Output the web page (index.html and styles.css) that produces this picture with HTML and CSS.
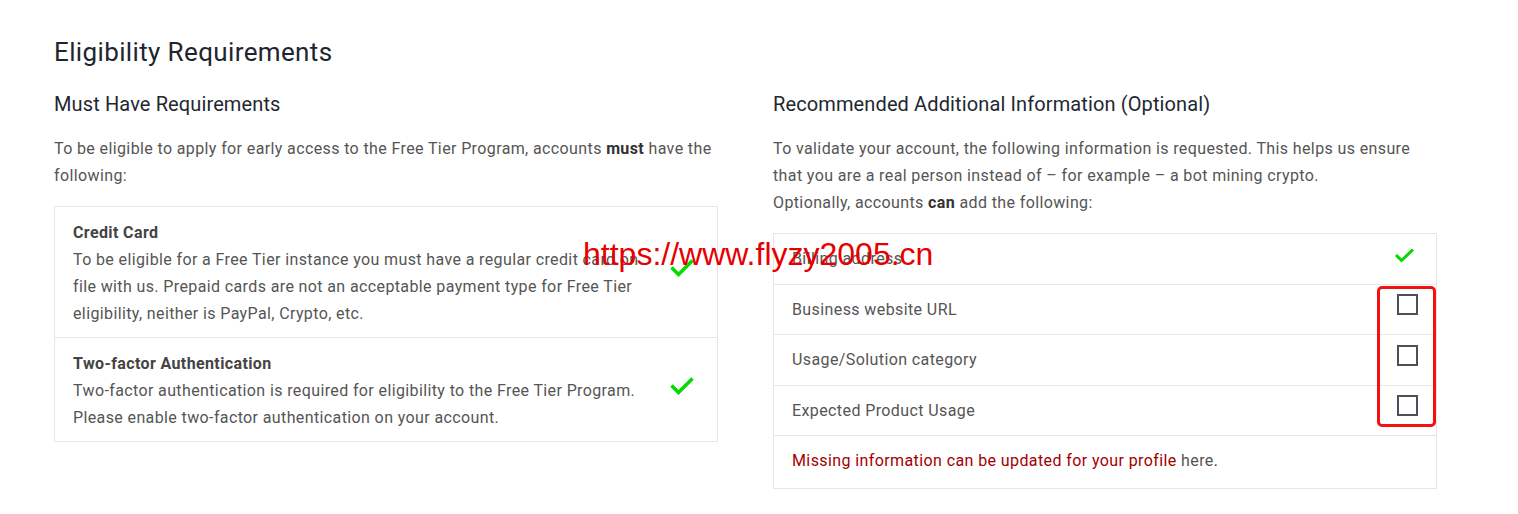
FILE: index.html
```html
<!DOCTYPE html>
<html lang="en">
<head>
  <meta charset="UTF-8">
  <meta name="viewport" content="width=device-width, initial-scale=1.0">
  <title>Eligibility Requirements</title>
  <link rel="stylesheet" href="styles.css">
</head>
<body>
  <div class="page">
    <h1>Eligibility Requirements</h1>
    <div class="columns">
      <div class="col">
        <h2>Must Have Requirements</h2>
        <p class="intro">To be eligible to apply for early access to the Free Tier Program, accounts <b>must</b> have the following:</p>
        <div class="box">
          <div class="req">
            <div class="req-text">
              <div class="req-title">Credit Card</div>
              To be eligible for a Free Tier instance you must have a regular credit card on file with us. Prepaid cards are not an acceptable payment type for Free Tier eligibility, neither is PayPal, Crypto, etc.
            </div>
            <svg class="check" viewBox="0 0 26 21"><path d="M2.5 10.5 L9.5 17.5 L23.5 3.5" /></svg>
          </div>
          <div class="req">
            <div class="req-text">
              <div class="req-title">Two-factor Authentication</div>
              Two-factor authentication is required for eligibility to the Free Tier Program. Please enable two-factor authentication on your account.
            </div>
            <svg class="check" viewBox="0 0 26 21"><path d="M2.5 10.5 L9.5 17.5 L23.5 3.5" /></svg>
          </div>
        </div>
      </div>

      <div class="col">
        <h2>Recommended Additional Information (Optional)</h2>
        <p class="intro">To validate your account, the following information is requested. This helps us ensure that you are a real person instead of &ndash; for example &ndash; a bot mining crypto.<br>Optionally, accounts <b>can</b> add the following:</p>
        <div class="box">
          <div class="row">
            <span>Billing address</span>
            <svg class="check small" viewBox="0 0 21 16"><path d="M2 8 L7.5 13.5 L19 2.5" /></svg>
          </div>
          <div class="row">
            <span>Business website URL</span>
            <span class="tick-box"></span>
          </div>
          <div class="row">
            <span>Usage/Solution category</span>
            <span class="tick-box"></span>
          </div>
          <div class="row">
            <span>Expected Product Usage</span>
            <span class="tick-box"></span>
          </div>
          <div class="row">
            <span class="missing">Missing information can be updated for your profile <a href="#">here</a>.</span>
          </div>
        </div>
      </div>
    </div>
  </div>

  <div class="mark-box"></div>
  <div class="watermark">https://www.flyzy2005.cn</div>
</body>
</html>
```

FILE: styles.css
```css
body {
  margin: 0;
  font-family: Roboto, 'Liberation Sans', sans-serif;
  color: #555;
  background: #fff;
}

.page {
  padding: 36px 54px 20px;
}

h1 {
  margin: 0 0 22px;
  font-size: 26px;
  line-height: 32px;
  font-weight: 400;
  letter-spacing: 0.37px;
  color: #1f2530;
}

.columns {
  display: grid;
  grid-template-columns: 664px 664px;
  column-gap: 55px;
}

h2 {
  margin: 0 0 17px;
  font-size: 20px;
  line-height: 28px;
  font-weight: 400;
  letter-spacing: 0.12px;
  color: #222831;
}

.intro {
  margin: 0 0 17px;
  font-size: 16px;
  line-height: 27px;
  letter-spacing: 0.38px;
}

.intro b {
  color: #333;
}

.box {
  border: 1px solid #e6e6e6;
}

.req {
  display: flex;
  align-items: center;
  padding: 11.5px 22px 10.5px 18px;
  border-top: 1px solid #e6e6e6;
  font-size: 16px;
  line-height: 27px;
  letter-spacing: 0.38px;
}

.req:first-child {
  border-top: none;
}

.req-text {
  flex: 1;
  padding-right: 14px;
}

.req-title {
  font-weight: 700;
  color: #444;
}

.check {
  width: 26px;
  height: 21px;
  margin-bottom: 10px;
  flex-shrink: 0;
}

.check path {
  fill: none;
  stroke: #00dc00;
  stroke-width: 3.5;
}

.check.small {
  align-self: flex-start;
  width: 21px;
  height: 16px;
  margin: 1.5px 3px 0 0;
}

.check.small path {
  stroke-width: 3;
}

.row {
  display: flex;
  align-items: flex-start;
  justify-content: space-between;
  padding: 11px 18px 11.5px;
  border-top: 1px solid #e6e6e6;
  font-size: 16px;
  line-height: 27px;
  letter-spacing: 0.4px;
}

.row:first-child {
  border-top: none;
}

.row:last-child {
  padding-bottom: 14px;
}

.tick-box {
  width: 17px;
  height: 17px;
  border: 2px solid #4e5058;
  margin-top: -1.5px;
}

.missing {
  color: #a30000;
}

.missing a {
  color: #555;
  text-decoration: none;
}

.mark-box {
  position: absolute;
  left: 1377px;
  top: 286px;
  width: 53px;
  height: 135px;
  border: 3px solid #f31212;
  border-radius: 5px;
}

.watermark {
  position: absolute;
  left: 583px;
  top: 238px;
  font-family: 'Liberation Sans', Arial, sans-serif;
  font-size: 32px;
  line-height: 32px;
  color: #e60000;
  white-space: nowrap;
}
```
